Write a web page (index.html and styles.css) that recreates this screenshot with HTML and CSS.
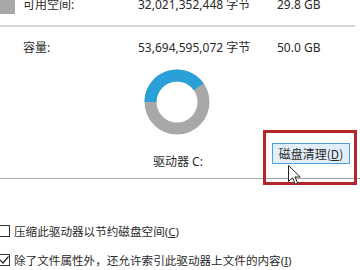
FILE: index.html
```html
<!DOCTYPE html>
<html lang="zh-CN">
<head>
<meta charset="utf-8">
<link rel="stylesheet" href="styles.css">
</head>
<body>
<div class="page">
  <div class="row row-first">
    <span class="swatch"></span>
    <span class="label">可用空间:</span>
    <span class="bytes">32,021,352,448 字节</span>
    <span class="size">29.8 GB</span>
  </div>
  <div class="divider"></div>
  <div class="row row-cap">
    <span class="swatch-empty"></span>
    <span class="label">容量:</span>
    <span class="bytes">53,694,595,072 字节</span>
    <span class="size">50.0 GB</span>
  </div>
  <div class="middle">
    <svg class="donut" width="70" height="70" viewBox="0 0 70 70">
      <circle cx="35" cy="35" r="26.5" fill="none" stroke="#a8a8a8" stroke-width="12"/>
      <path d="M8.5 35 A26.5 26.5 0 0 1 56.7 19.8" fill="none" stroke="#2a9fd8" stroke-width="12"/>
    </svg>
    <div class="drive">驱动器 C:</div>
    <button class="cleanup">磁盘清理(<u>D</u>)</button>
  </div>
  <div class="rule"></div>
  <div class="checks">
    <label class="check"><span class="box"></span><span>压缩此驱动器以节约磁盘空间(<u>C</u>)</span></label>
    <label class="check"><span class="box"><svg width="12" height="12" viewBox="0 0 12 12"><path d="M2 6 L5 9 L10.5 2.5" fill="none" stroke="#222" stroke-width="1.2"/></svg></span><span>除了文件属性外，还允许索引此驱动器上文件的内容(<u>I</u>)</span></label>
  </div>
  <div class="highlight"></div>
  <svg class="cursor" width="14" height="21" viewBox="0 0 14 21">
    <path d="M0.5 0.5 L0.5 16.5 L4.5 12.8 L7.3 19.2 L9.6 18.2 L7 12 L12.3 12 Z" fill="#fff" stroke="#222" stroke-width="1" stroke-linejoin="round"/>
  </svg>
</div>
</body>
</html>
```
FILE: styles.css
```css
* { box-sizing: border-box; }
html, body { margin: 0; padding: 0; background: #fff; }
body {
  width: 360px;
  height: 270px;
  overflow: hidden;
  font-family: "Noto Sans", "Noto Sans CJK SC", sans-serif;
  font-size: 12px;
  color: #2a2a2a;
}
.page { position: relative; width: 360px; height: 270px; }
.row {
  display: grid;
  grid-template-columns: 23px 115px 139px 1fr;
  height: 18px;
  line-height: 18px;
  align-items: center;
}
.row-first { margin-top: -4px; }
.row-cap { margin-top: 12px; }
.swatch { width: 15px; height: 18px; background: #a8a8a8; }
.label, .bytes, .size { white-space: nowrap; }
.divider { margin-top: 11px; width: 355px; height: 2px; background: #d6d6d6; }
.middle {
  display: grid;
  grid-template-columns: 142px 130px 78px;
  grid-template-rows: 70px 17px 16px;
  margin-top: 10px;
}
.donut { grid-column: 2; grid-row: 1; display: block; }
.drive {
  grid-column: 2;
  grid-row: 3;
  padding-left: 11px;
  line-height: 16px;
  white-space: nowrap;
}
.cleanup {
  grid-column: 3;
  grid-row: 1 / 4;
  align-self: end;
  margin-bottom: 6px;
  width: 78px;
  height: 21px;
  padding: 0;
  border: 1px solid #4c9fdb;
  background: #e2eef9;
  font-family: "Noto Sans CJK SC", "Noto Sans", sans-serif;
  font-size: 12px;
  color: #2a2a2a;
  line-height: 19px;
}
.rule { margin-top: 8px; height: 1px; background: #a9a9a9; }
.checks {
  margin-top: 43px;
  display: flex;
  flex-direction: column;
  gap: 11px;
  font-size: 11.6px;
}
.check {
  display: flex;
  align-items: center;
  height: 18px;
  white-space: nowrap;
}
.box {
  width: 12px;
  height: 12px;
  margin-left: -2px;
  margin-right: 4px;
  border: 1px solid #333;
  background: #fff;
  display: flex;
}
.box svg { margin: -1px; }
.highlight {
  position: absolute;
  left: 263px;
  top: 134px;
  width: 94px;
  height: 55px;
  border: 3px solid #b3262b;
}
.cursor { position: absolute; left: 288px; top: 169px; }
```
